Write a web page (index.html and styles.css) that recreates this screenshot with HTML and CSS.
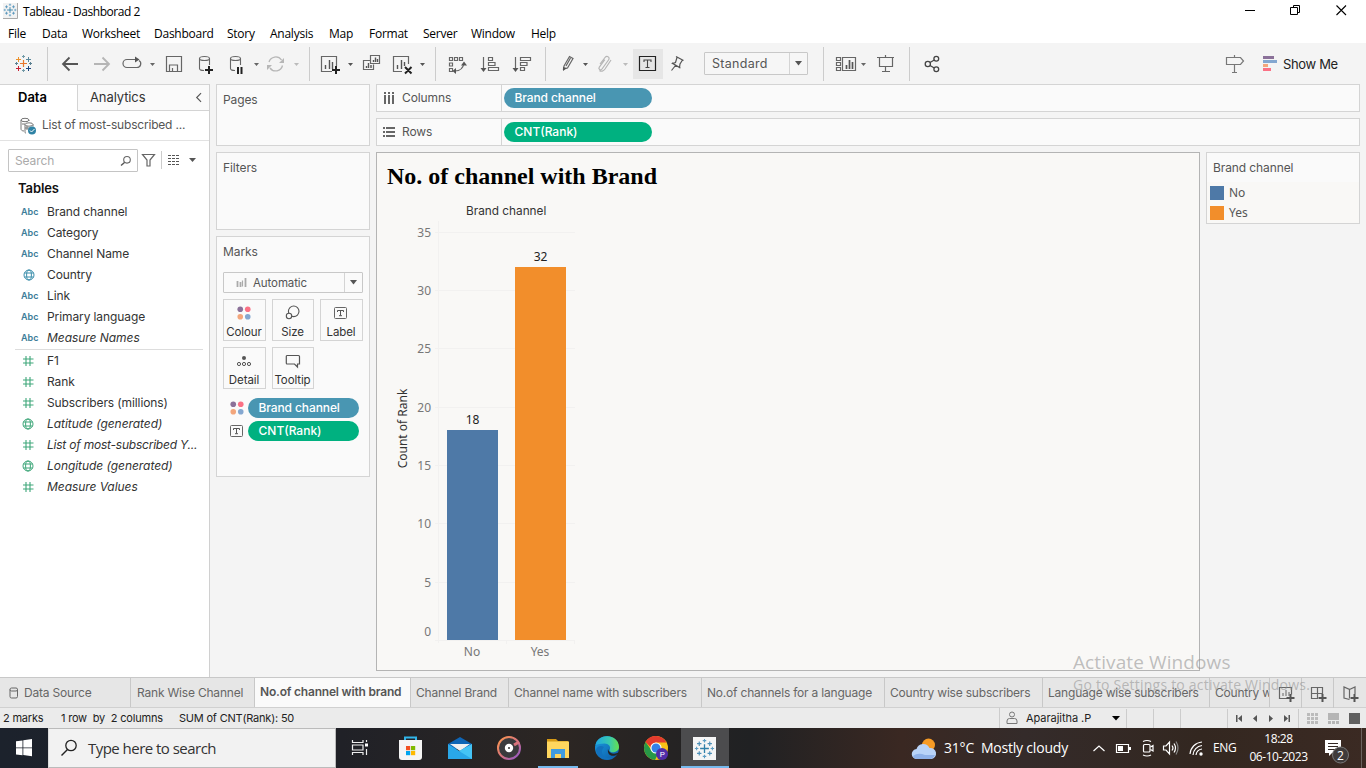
FILE: index.html
```html
<!DOCTYPE html>
<html lang="en">
<head>
<meta charset="utf-8">
<title>Tableau - Dashborad 2</title>
<link rel="stylesheet" href="styles.css">
</head>
<body>
<svg class="defs" width="0" height="0">
  <symbol id="globe" viewBox="0 0 12 12"><g fill="none" stroke="currentColor" stroke-width="1"><circle cx="6" cy="6" r="5"/><ellipse cx="6" cy="6" rx="2.4" ry="5"/><path d="M1.5 4h9M1.5 8h9"/></g></symbol>
  <symbol id="hash" viewBox="0 0 12 12"><path d="M4 1v10M8 1v10M1 4h10.500M1 8h10.500" fill="none" stroke="currentColor" stroke-width="1.100"/></symbol>
  <symbol id="dots" viewBox="0 0 16 16"><circle cx="4" cy="4" r="3" fill="#8b7199"/><circle cx="12" cy="4" r="3" fill="#fb7185"/><circle cx="4" cy="12" r="3" fill="#f3a67c"/><circle cx="12" cy="12" r="3" fill="#84a7d0"/></symbol>
  <symbol id="label" viewBox="0 0 14 14"><rect x=".5" y="1.500" width="12" height="11" rx="1" fill="none" stroke="#666"/><path d="M3.500 6V4.500h6V6M6.500 4.500v5M5 9.700h3" fill="none" stroke="#555"/></symbol>
  <symbol id="spark" viewBox="0 0 24 24"><path d="M12 7v10M7 12h10" stroke="#2f7fa8" stroke-width="1.500"/><path d="M12 1v4M10 3h4M12 19v4M10 21h4M3 10v4M1 12h4M21 10v4M19 12h4" stroke="#5b9cc2" stroke-width="1.200"/><path d="M6 4v5M3.500 6.500h5M18 4v5M15.500 6.500h5M6 15v5M3.500 17.500h5M18 15v5M15.500 17.500h5" stroke="#4b8fb8" stroke-width="1.300"/></symbol>
</svg>

<header class="titlebar">
  <svg class="app-icon" width="15" height="16" viewBox="0 0 15 16"><path d="M0 0h14v15H0z" fill="#f2f2f2"/><path d="M14.500 0v15.500H0" fill="none" stroke="#aaa"/><use href="#spark" x="0" y="0" width="14" height="14"/></svg>
  <span class="title">Tableau - Dashborad 2</span>
  <svg class="win-buttons" width="120" height="22" viewBox="1240 0 120 22"><g fill="none" stroke="#000"><path d="M1245 10.500h10M1293.500 7.500v-2h6v7h-2M1290.500 7.500h7v7h-7z"/><path d="M1336.500 5.500l9.500 9.500M1346 5.500l-9.500 9.500" stroke-width="1.100"/></g></svg>
</header>

<nav class="menubar"><span class="m1">File</span><span class="m2">Data</span><span class="m3">Worksheet</span><span class="m4">Dashboard</span><span class="m5">Story</span><span class="m6">Analysis</span><span class="m7">Map</span><span class="m8">Format</span><span class="m9">Server</span><span class="m10">Window</span><span class="m11">Help</span></nav>

<section class="toolbar">
  <svg width="310" height="41" viewBox="0 43 310 41">
    <g fill="none" stroke-width="1.200">
      <path d="M23.500 60v7M20 63.500h7" stroke="#e8762c" stroke-width="1.200"/>
      <path d="M18.500 57v5M16 59.500h5" stroke="#eb912c" stroke-width="1"/><path d="M28.500 57v5M26 59.500h5" stroke="#59879b" stroke-width="1"/>
      <path d="M18.500 66v5M16 68.500h5" stroke="#c72035" stroke-width="1"/><path d="M28.500 66v5M26 68.500h5" stroke="#1f457e" stroke-width="1"/>
      <path d="M23.500 55v3M22 56.500h3M23.500 69v3M22 70.500h3" stroke="#7199a6" stroke-width="1"/><path d="M16.500 62v3M15 63.500h3M30.500 62v3M29 63.500h3" stroke="#5b8091" stroke-width="1"/>
    </g>
    <path d="M47.500 47v34M309.500 47v34" stroke="#ccc"/>
    <path d="M78 64H63M69.500 57.500L63 64l6.500 6.500" fill="none" stroke="#555" stroke-width="1.800"/>
    <path d="M94 64h15M102.500 57.500L109 64l-6.500 6.500" fill="none" stroke="#b5b5b5" stroke-width="1.800"/>
    <path d="M130 59.500h-3a4 4 0 0 0 0 8h10a3.800 3.800 0 0 0 2-7M129 59.500h7" fill="none" stroke="#666" stroke-width="1.200"/><path d="M135 56.500l4.500 3-4.500 3z" fill="#555"/>
    <path d="M150 63h5l-2.500 3zM254 63h5l-2.500 3z" fill="#666"/><path d="M294 63h5l-2.500 3z" fill="#bbb"/>
    <path d="M166.500 56.500h15v15h-15zM169.500 71v-6h8v6M172.500 71v-3" fill="none" stroke="#666" stroke-width="1.200"/>
    <g fill="none" stroke="#666" stroke-width="1.100"><ellipse cx="204.500" cy="58.500" rx="5" ry="2"/><path d="M199.500 58.500v10c0 1.500 2 2 4.500 2M209.500 58.500V65"/><ellipse cx="235.500" cy="58.500" rx="5" ry="2"/><path d="M230.500 58.500v10c0 1.500 2 2 4.500 2M240.500 58.500V65"/></g>
    <path d="M205 70h8M209 66v8" stroke="#222" stroke-width="2"/><path d="M238 67v7M241.500 67v7" stroke="#222" stroke-width="2"/>
    <path d="M269 62a7 7 0 0 1 12.500-2M282.500 65.500a7 7 0 0 1-12.500 2.500" fill="none" stroke="#b7b7b7" stroke-width="1.300"/><path d="M284 58v5h-5zM267 70v-5h5z" fill="#b7b7b7"/>
  </svg>
  <svg width="323" height="41" viewBox="310 43 323 41">
    <g fill="none" stroke="#666" stroke-width="1.200">
      <path d="M332 71.500h-10.500v-15h15V66M402 71.500h-8.500v-15h15V64"/>
      <path d="M370.500 55.500h9v8h-9zM370 60.500h-6.500v9h10v-5"/>
      <path d="M449.500 57.500h3v3h-3zM454.500 57.500h3v3h-3zM459.500 57.500h3v3h-3zM449.500 63h3v3h-3zM449.500 68.500h3v3h-3z"/>
      <path d="M455 71c5 0 8-2 9-8"/>
      <path d="M483.500 57v13M488.500 57.500h4v3h-4zM488.500 62.500h6.500v3h-6.500zM488.500 67.500h10v3h-10zM515.500 57v13M520.500 57.500h10v3h-10zM520.500 62.500h6.500v3h-6.500zM520.500 67.500h4v3h-4z"/>
      <path d="M564 66l5.500-9.500 3.500 2-5.500 9.500-4 1zM566 66l4.500-8"/>
    </g>
    <path d="M325.500 65v4M329.500 60v9M332.500 62v7M397.500 65v4M401.500 60v9M404.500 62v4M373.500 60v2M375.500 57.500v4.500M377.500 59v3M366.500 66v2M368.500 63v5M371 65v3" stroke="#555" stroke-width="1.400"/>
    <path d="M332 70h8M336 66v8M405 67l6.500 6.500M411.500 67l-6.500 6.500" stroke="#222" stroke-width="2"/>
    <path d="M456 68l-3.500 3 3.500 3zM461 65.500l3-4 3 4zM480.500 68h6l-3 4zM512.500 68h6l-3 4zM348 63h5l-2.500 3zM420 63h5l-2.500 3zM583 63h5l-2.500 3zM563 67l4 1-4 3z" fill="#555"/>
    <path d="M623 63h5l-2.500 3z" fill="#bbb"/>
    <path d="M600 64l5-6.500c2-2.500 5.500 0 3.500 2.500l-6.500 9c-1.500 2-4 0-2.700-1.800l5.500-7.500M611 60l-6 9c-1.500 2-4 3-5.500 1.500" fill="none" stroke="#b5b5b5" stroke-width="1.200"/>
    <path d="M435.500 47v34M545.500 47v34" stroke="#ccc"/>
  </svg>
  <svg class="pressed" width="30" height="30" viewBox="633 49 30 30"><path d="M639.500 56.500h16v14h-16z" fill="none" stroke="#222" stroke-width="1.200"/><path d="M644 62v-2h7v2M647.500 60v7.500M645.500 67.500h4" fill="none" stroke="#444" stroke-width="1.100"/></svg>
  <svg width="41" height="41" viewBox="663 43 41 41"><path d="M676 56.500l7.500 4M677 57.500l-1.500 5-3 1 7 4 .5-3.500 2.500-4M675.500 65.500l-4 5M672 63l8.500 5" fill="none" stroke="#555" stroke-width="1.200"/></svg>
  <div class="fit"><span>Standard</span><i><svg width="8" height="5"><path d="M0 0h7L3.500 4.500z" fill="#555"/></svg></i></div>
  <svg width="455" height="41" viewBox="808 43 455 41">
    <path d="M823.500 47v34M909.500 47v34" stroke="#ccc"/>
    <path d="M836.500 57.500h4v3h-4zM836.500 62.500h4v3h-4zM836.500 67.500h4v3h-4zM842.500 57.500h13v13h-13zM877 57.500h17M879.500 57.500v9h13v-9M885.500 55v2M885.500 67v4M882 71.500h8" fill="none" stroke="#666" stroke-width="1.200"/>
    <path d="M846.500 65v4M849.500 60v9M852.500 62v7" stroke="#555" stroke-width="1.700"/><path d="M861 63h5l-2.500 3z" fill="#666"/>
    <g fill="none" stroke="#444" stroke-width="1.300"><circle cx="927.800" cy="64" r="2.600"/><circle cx="936.300" cy="58.700" r="2.400"/><circle cx="936.300" cy="69.300" r="2.400"/><path d="M930 62.500l4.300-2.500M930 65.500l4.300 2.500"/></g>
    <path d="M1226.500 57.500h14l3 3.500-3 3.500h-14zM1234.500 55v2M1234.500 65v7M1232 72.500h5" fill="none" stroke="#777" stroke-width="1.200"/>
  </svg>
  <svg width="20" height="41" viewBox="1263 43 20 41"><path d="M1263 56h11v3h-11z" fill="#8b7199"/><path d="M1263 60h14v3h-14z" fill="#84a7d0"/><path d="M1263 64h5v3h-5z" fill="#f3a67c"/><path d="M1263 68h8v3h-8z" fill="#fb7185"/></svg>
  <span class="showme">Show Me</span>
</section>

<main class="workspace">
  <aside class="datapane">
    <div class="pane-tabs"><b>Data</b><span>Analytics</span><svg width="14" height="26" viewBox="195 84 14 26"><path d="M201 92.500l-4.500 4.500 4.500 4.500" fill="none" stroke="#555" stroke-width="1.200"/></svg></div>
    <div class="source"><svg width="18" height="18" viewBox="19 116 18 18"><g fill="none" stroke="#777"><ellipse cx="25" cy="119" rx="4" ry="1.700"/><path d="M21 119v9c0 1 1 2 3 2M29 119v1"/><ellipse cx="29" cy="123.500" rx="4" ry="1.700"/><path d="M25 123.500v6.500c0 1 0 2 1 2.500M33 123.500v2M22 123h3M25 127h4M27 125v4"/></g><circle cx="32" cy="129.500" r="4" fill="#2f83a5"/><path d="M30 129.500l1.500 1.500 3-3" fill="none" stroke="#fff"/></svg><span>List of most-subscribed ...</span></div>
    <div class="searchrow"><div class="search"><span>Search</span><svg width="12" height="12" viewBox="0 0 12 12"><circle cx="7" cy="4.800" r="3.300" fill="none" stroke="#666" stroke-width="1.100"/><path d="M4.500 7.500L1 10.500" stroke="#555" stroke-width="1.400"/></svg></div>
      <svg width="66" height="24" viewBox="138 149 66 24"><path d="M142.500 154.500h12l-4.500 5.500v6h-3v-6z" fill="none" stroke="#666" stroke-width="1.200"/><path d="M161.500 151v18" stroke="#ccc"/><path d="M168 155.500h12M168 158.500h12M168 161.500h12M168 164.500h12" stroke="#555" stroke-width="1" stroke-dasharray="3 1"/><path d="M189 158h7l-3.500 4z" fill="#555"/></svg></div>
    <h2>Tables</h2>
    <ul class="fields">
      <li><b>Abc</b>Brand channel</li><li><b>Abc</b>Category</li><li><b>Abc</b>Channel Name</li>
      <li><svg class="ic blue"><use href="#globe"/></svg>Country</li><li><b>Abc</b>Link</li><li><b>Abc</b>Primary language</li><li><b>Abc</b><em>Measure Names</em></li>
    </ul>
    <ul class="fields measures">
      <li><svg class="ic"><use href="#hash"/></svg>F1</li><li><svg class="ic"><use href="#hash"/></svg>Rank</li><li><svg class="ic"><use href="#hash"/></svg>Subscribers (millions)</li>
      <li><svg class="ic"><use href="#globe"/></svg><em>Latitude (generated)</em></li><li><svg class="ic"><use href="#hash"/></svg><em class="long">List of most-subscribed Y...</em></li><li><svg class="ic"><use href="#globe"/></svg><em>Longitude (generated)</em></li><li><svg class="ic"><use href="#hash"/></svg><em>Measure Values</em></li>
    </ul>
  </aside>

  <div class="cards">
    <section class="card pages">Pages</section>
    <section class="card filters">Filters</section>
    <section class="card marks">
      <div class="card-title">Marks</div>
      <div class="marktype"><svg width="11" height="11" viewBox="0 0 11 11"><path d="M1.500 4v6M4.500 5v5M9.500 1v9" stroke="#aaa" stroke-width="1.800"/><path d="M6.500 3.500v6" stroke="#aaa" stroke-width="1.200"/></svg><span>Automatic</span><i><svg width="8" height="5"><path d="M0 0h7L3.500 4.500z" fill="#555"/></svg></i></div>
      <div class="markgrid">
        <div><svg width="16" height="16" viewBox="0 0 16 16"><use href="#dots" x=".5" y=".5" width="15" height="15"/></svg><span>Colour</span></div>
        <div><svg width="16" height="16" viewBox="0 0 16 16"><g fill="none" stroke="#555" stroke-width="1.100"><circle cx="8.700" cy="6.300" r="5.300"/><circle cx="4" cy="11" r="2.700" fill="#fafafa"/></g></svg><span>Size</span></div>
        <div><svg width="14" height="16"><use href="#label" width="14" height="14" y="1"/></svg><span>Label</span></div>
        <div><svg width="16" height="16" viewBox="0 0 16 16"><circle cx="8" cy="5" r="2" fill="#555"/><g fill="none" stroke="#555"><circle cx="3" cy="11" r="1.600"/><circle cx="8" cy="11" r="1.600"/><circle cx="13" cy="11" r="1.600"/></g></svg><span>Detail</span></div>
        <div><svg width="16" height="16" viewBox="0 0 16 16"><path d="M2 2.500h11.500q1 0 1 1V11h-2v3l-3-3H2q-.7 0-.7-1V3.500q0-1 .7-1z" fill="none" stroke="#555" stroke-width="1.200"/></svg><span>Tooltip</span></div>
      </div>
      <div class="markpill"><svg width="16" height="16" viewBox="0 0 16 16"><use href="#dots" x=".5" y=".5" width="15" height="15"/></svg><span class="pill">Brand channel</span></div>
      <div class="markpill"><svg width="16" height="16"><use href="#label" width="14" height="14" x="1" y="1"/></svg><span class="pill green">CNT(Rank)</span></div>
    </section>
  </div>

  <div class="view">
    <div class="shelf"><div class="shelf-name"><svg width="14" height="14" viewBox="0 0 14 14"><path d="M3 1v2M3 4v9M7 1v2M7 4v9M11 1v2M11 4v9" stroke="#666" stroke-width="2"/></svg>Columns</div><span class="pill">Brand channel</span></div>
    <div class="shelf"><div class="shelf-name"><svg width="14" height="14" viewBox="0 0 14 14"><path d="M1 3h2M4 3h9M1 7h2M4 7h9M1 11h2M4 11h9" stroke="#666" stroke-width="2"/></svg>Rows</div><span class="pill green">CNT(Rank)</span></div>
    <div class="viewrow">
      <section class="canvas">
        <h1>No. of channel with Brand</h1>
        <svg class="chart" width="220" height="470" viewBox="377 198 220 470">
          <path d="M435 232.500h140M435 290.500h140M435 348.500h140M435 407.500h140M435 465.500h140M435 523.500h140M435 582.500h140M435 640.500h140M438.500 221v422M506.500 640v4M574.500 640v4" stroke="#f2f1f0" fill="none"/>
          <path d="M447 430h51v210h-51z" fill="#4e79a7"/><path d="M515 267h51v373h-51z" fill="#f28e2b"/>
          <text x="466" y="215" class="head">Brand channel</text>
          <g class="axis" text-anchor="end"><text x="431" y="237">35</text><text x="431" y="295">30</text><text x="431" y="353">25</text><text x="431" y="412">20</text><text x="431" y="470">15</text><text x="431" y="528">10</text><text x="431" y="587">5</text><text x="431" y="636">0</text></g>
          <g class="axis" text-anchor="middle"><text x="472" y="656">No</text><text x="540" y="656">Yes</text></g>
          <g class="val" text-anchor="middle"><text x="472.500" y="424">18</text><text x="540.500" y="261">32</text></g>
          <text class="ytitle" text-anchor="middle" transform="translate(406.500 428.500) rotate(-90)">Count of Rank</text>
        </svg>
      </section>
      <section class="legend"><div>Brand channel</div><ul><li><i class="no"></i>No</li><li><i class="yes"></i>Yes</li></ul></section>
    </div>
  </div>
</main>

<nav class="sheets">
  <span class="t1"><svg width="10" height="12" viewBox="0 0 10 12"><path d="M1 2.500v7q0 1.500 1.500 1.500h4.500q1.500 0 1.500-1.500v-7q0-1.500-1.500-1.500H2.500Q1 1 1 2.500 1 4 2.500 4h4.500q1.500 0 1.500-1.500" fill="none" stroke="#666"/></svg>Data Source</span><span class="t2">Rank Wise Channel</span><span class="t3">No.of channel with brand</span><span class="t4">Channel Brand</span><span class="t5">Channel name with subscribers</span><span class="t6">No.of channels for a language</span><span class="t7">Country wise subscribers</span><span class="t8">Language wise subscribers</span><span class="t9">Country w</span>
  <svg width="96" height="30" viewBox="1270 677 96 30"><path d="M1301.500 677v30M1333.500 677v30" stroke="#c8c8c8"/><path d="M1287 697.500h-7.500v-11h12v7M1318 697.500h-6.500v-11h11v7M1317.500 686.500v11M1311.500 692.500h11M1349.500 697.500v-9l-5.500-2.500v11l5.500 1.500M1349.500 688.500l5.500-2.500v7" fill="none" stroke="#666" stroke-width="1.200"/><path d="M1283 692v3M1286 689v6M1289 691v4" stroke="#666"/><path d="M1286.500 697h8M1290.500 693v8M1318.500 697h8M1322.500 693v8M1350.500 697h8M1354.500 693v8" stroke="#555" stroke-width="2"/></svg>
</nav>

<footer class="status">
  <span class="s1">2 marks</span><span class="s2">1 row&nbsp; by&nbsp; 2 columns</span><span class="s3">SUM of CNT(Rank): 50</span>
  <span class="user"><svg width="12" height="14" viewBox="0 0 12 14"><g fill="none" stroke="#777" stroke-width="1"><circle cx="6" cy="3.500" r="2.500"/><path d="M1 12.500V10q0-2.500 2.500-2.500h5q2.500 0 2.500 2.500v2.500z"/></g></svg><span>Aparajitha .P</span><svg width="8" height="5"><path d="M0 0h8L4 4.500z" fill="#000"/></svg></span>
  <svg width="240" height="21" viewBox="1126 707 240 21"><path d="M1126.500 708v20M1153.500 708v20M1180.500 708v20M1227.500 708v20M1298.500 708v20" stroke="#ccc"/><path d="M1236 714h1.500v7h-1.500zM1242 714v7l-4-3.500zM1257 714v7l-4-3.500zM1269 714v7l4-3.500zM1284 714v7l4-3.500zM1288.500 714h1.500v7h-1.500z" fill="#555"/><path d="M1307 713.500h11M1307 717.500h11M1307 721.500h11" stroke="#bbb" stroke-width="3" stroke-dasharray="3 1"/><path d="M1328 712h11v7h-11z" fill="#b5b5b5"/><path d="M1328 721.500h11" stroke="#b5b5b5" stroke-width="3" stroke-dasharray="3 1"/><path d="M1349 712h11v11h-11z" fill="#606060"/></svg>
</footer>

<footer class="taskbar">
  <svg width="48" height="40" viewBox="0 728 48 40"><path d="M16 741.300l6.500-.9v7H16zM23.300 740.200l8.700-1.200v8.400h-8.700zM16 748.300h6.500v7l-6.500-.9zM23.300 748.300H32v7.900l-8.700-1.200z" fill="#fff"/></svg>
  <div class="winsearch"><svg width="18" height="18" viewBox="0 0 18 18"><circle cx="11" cy="6.500" r="5.200" fill="none" stroke="#222" stroke-width="1.300"/><path d="M7.500 10.500L1.500 16.500" stroke="#222" stroke-width="1.400"/></svg><span>Type here to search</span></div>
  <svg class="apps" width="574" height="40" viewBox="336 728 574 40">
    <defs>
      <linearGradient id="gm" x1="0" y1="0" x2="1" y2="1"><stop offset="0" stop-color="#ff9a4b"/><stop offset=".5" stop-color="#d8747c"/><stop offset="1" stop-color="#8a55d0"/></linearGradient>
      <linearGradient id="ge" x1="0" y1="0" x2="1" y2="0"><stop offset="0" stop-color="#1ea7e4"/><stop offset=".6" stop-color="#39c9ae"/><stop offset="1" stop-color="#66e04c"/></linearGradient>
      <linearGradient id="gb" x1="0" y1="0" x2="1" y2="1"><stop offset="0" stop-color="#1b9de2"/><stop offset="1" stop-color="#0c59a4"/></linearGradient>
    </defs>
    <path d="M352.500 740v2.500h10.500V740M352.500 755v-2.500h10.500v2.500M352.500 745h10.500v5h-10.500zM366.500 740v2M366.500 749v6" fill="none" stroke="#eee" stroke-width="1.200"/><path d="M365 743.500h3v3h-3z" fill="#fff"/>
    <path d="M405 740v-2.500h11v2.500" fill="none" stroke="#31b5e9" stroke-width="2"/><path d="M399 740h23v17q0 3-3 3h-17q-3 0-3-3z" fill="#f5f5f5"/><path d="M406 746h4.200v4.200H406z" fill="#f25022"/><path d="M411 746h4.200v4.200H411z" fill="#7fba00"/><path d="M406 751h4.200v4.200H406z" fill="#00a4ef"/><path d="M411 751h4.200v4.200H411z" fill="#ffb900"/>
    <path d="M448 744l12-7 12 7v5h-24z" fill="#0f65b5"/><path d="M450 744h20l-10 7z" fill="#f0f0f0"/><path d="M448 744l12 7.500 12-7.500v15h-24z" fill="#2aa7e8"/><path d="M472 744v15l-13-8z" fill="#45c4f5"/>
    <circle cx="509" cy="748" r="11" fill="#3a3a3d" stroke="url(#gm)" stroke-width="2"/><path d="M514 745l5-3" stroke="#d8747c" stroke-width="3"/><circle cx="509" cy="748" r="4.200" fill="#fff"/><circle cx="509" cy="748" r="1" fill="#333"/>
    <path d="M547 739h9l2 2h10v5h-21z" fill="#d69a15"/><path d="M547 741.500h22v16.500h-22z" fill="#ffd65e"/><path d="M551 749h14v9h-4v-4h-6v4h-4z" fill="#3f9be0"/>
    <circle cx="607" cy="748" r="12" fill="url(#gb)"/><path d="M595.500 745c2-12 23-12 23.500 2 0 6-9 6.500-9.500 3.500 2-4-1-7-5-7-4 0-7 1-9 1.500z" fill="url(#ge)"/><path d="M619 752c-4 3-10 2-11-3-1 6 4 9 10 5z" fill="#232323"/><path d="M604 747c-6 7 2 13 9 11-5 3-16 2-17-8 1-4 5-5 8-3z" fill="#1271bd"/>
    <circle cx="656" cy="748" r="12" fill="#fbc116"/><path d="M645.500 742A12 12 0 0 1 666.500 742.500H656q-5 1-5 5z" fill="#e33b2e"/><path d="M645.600 742A12 12 0 0 0 655 760l4-8-7-1z" fill="#279847"/><circle cx="656" cy="748" r="5.600" fill="#fff"/><circle cx="656" cy="748" r="4.500" fill="#3481e8"/><circle cx="662" cy="754" r="6" fill="#512da8"/><text x="659.800" y="757" class="avatar">P</text>
    <path d="M681 728h48v40h-48z" fill="#4c4c4e"/><path d="M681 766h48v2h-48zM538 766h40v2h-40z" fill="#76b9ed"/><path d="M693 737h23v23h-23z" fill="#f5f5f5"/><use href="#spark" x="694" y="738" width="21" height="21"/>
  </svg>
  <svg width="34" height="40" viewBox="910 728 34 40"><circle cx="928.500" cy="745" r="6.500" fill="#f79b25"/><path d="M917 759a5 5 0 0 1-.5-10 7 7 0 0 1 13-1 5.500 5.500 0 0 1 2 11z" fill="#b9d3f7"/><path d="M913 756q5-4 12-1 5 0 10 0-2 4-5 4h-13q-3 0-4-3z" fill="#8fb1e8"/></svg>
  <span class="weather">31°C&nbsp; Mostly cloudy</span>
  <svg width="120" height="40" viewBox="1088 728 120 40"><g fill="none" stroke="#fff" stroke-width="1.200"><path d="M1093.500 751l5.500-5 5.500 5M1116.500 744.500h12v8h-12z"/><rect x="1143.500" y="744.500" width="6.500" height="7.500" rx="1"/><path d="M1150.500 747l2.500-1.500v5.500l-2.500-1.500M1143 741.500q4-2 8 0M1143 755q4 2 8 0M1163.500 746h2.500l3.500-4v12l-3.500-4h-2.500z"/><path d="M1172 745.500q2 2.500 0 5M1174 743.500q3 4.500 0 9"/><path d="M1176 741.500q4 6.500 0 13" stroke="#888"/><path d="M1190 754a13 13 0 0 1 12-12M1193 755a10 10 0 0 1 9-9.500M1196 755a7 7 0 0 1 6-6"/></g><path d="M1118 746h5v5h-5zM1129 747h2v3h-2z" fill="#fff"/><circle cx="1201" cy="754" r="1.700" fill="#fff"/></svg>
  <span class="lang">ENG</span>
  <span class="clock"><span>18:28</span><span>06-10-2023</span></span>
  <svg width="54" height="40" viewBox="1312 728 54 40"><path d="M1325 740h16v13h-9l-3 3v-3h-4z" fill="#fff"/><path d="M1328 743.500h10M1328 746.500h10M1328 749.500h7" stroke="#342925" stroke-width="1.200"/><circle cx="1340.500" cy="755" r="8" fill="#3f3b3b" stroke="#777"/><text x="1337" y="759.500" class="badge">2</text><path d="M1361.500 728v40" stroke="#6b625e"/></svg>
</footer>

<div class="watermark"><div>Activate Windows</div><p>Go to Settings to activate Windows.</p></div>
</body>
</html>
```

FILE: styles.css
```css
* { box-sizing: border-box; }
body { margin: 0; width: 1366px; height: 768px; overflow: hidden; position: relative; display: flex; flex-direction: column; background: #f4f4f4; font: 370 12px/16px Inter, "Noto Sans", sans-serif; letter-spacing: -.1px; color: #333; white-space: nowrap; }
ul, h1, h2, p { margin: 0; padding: 0; list-style: none; }
svg { display: block; flex: none; }
.defs { display: none; }

.titlebar { height: 22px; flex: none; background: #fff; display: flex; padding-left: 3px; color: #000; font: 12px/22px "Open Sans", sans-serif; }
.app-icon { margin: 3px 5px 0 0; }
.title { letter-spacing: -.45px; line-height: 23px; }
.win-buttons { margin: 0 6px 0 auto; }
.menubar { height: 21px; flex: none; background: #fff; display: flex; padding-left: 8px; color: #000; font: 12px/23px "Open Sans", sans-serif; letter-spacing: -.25px; }
.m1 { width: 34px; } .m2 { width: 40px; } .m3 { width: 72px; } .m4 { width: 73px; } .m5 { width: 43px; } .m6 { width: 59px; } .m7 { width: 40px; } .m8 { width: 54px; } .m9 { width: 48px; } .m10 { width: 60px; }

.toolbar { height: 41px; flex: none; display: flex; align-items: center; background: #f4f4f4; }
.pressed { background: #e6e6e6; }
.fit { width: 104px; height: 23px; border: 1px solid #c8c8c8; border-radius: 1px; display: flex; background: #f6f6f6; font-size: 12.500px; line-height: 21px; letter-spacing: .3px; }
.fit span { flex: 1; padding-left: 7px; color: #555; }
.fit i, .marktype i { width: 18px; border-left: 1px solid #d4d4d4; display: flex; align-items: center; justify-content: center; }
.showme { font-size: 13px; color: #222; letter-spacing: -.35px; }

.workspace { height: 593px; flex: none; display: flex; gap: 6px; }
.datapane { width: 210px; background: #fff; border-right: 1px solid #d0d0d0; border-top: 1px solid #d4d4d4; }
.pane-tabs { height: 26px; display: flex; font-size: 13px; line-height: 25px; color: #333; }
.pane-tabs b { width: 77px; padding-left: 18px; font-weight: 600; color: #000; letter-spacing: 0; }
.pane-tabs span { width: 118px; padding-left: 12px; }
.pane-tabs span, .pane-tabs svg { background: #fafafa; border-bottom: 1px solid #d4d4d4; height: 26px; }
.pane-tabs span { border-left: 1px solid #d4d4d4; }
.source { height: 30px; border-bottom: 1px solid #e2e2e2; display: flex; align-items: center; padding-left: 19px; gap: 5px; color: #555; letter-spacing: -.2px; }
.source span { position: relative; top: -1px; }
.searchrow { display: flex; padding: 8px 0 0 8px; }
.search { width: 130px; height: 23px; border: 1px solid #c4c4c4; border-radius: 1px; display: flex; align-items: center; justify-content: space-between; padding: 0 5px 0 6px; color: #aaa; }
.datapane h2 { font-size: 13px; font-weight: 600; line-height: 20px; color: #111; padding: 5px 0 3px 18px; }
.fields li { height: 21px; line-height: 20px; display: flex; align-items: center; padding-left: 21px; }
.fields b { width: 26px; color: #3d7d99; font-size: 9px; font-weight: 600; letter-spacing: 0; padding-top: 1px; }
.ic { width: 12px; height: 12px; margin: 0 12px 0 2px; color: #3fa77a; }
.blue { color: #3d8fac; }
.fields em { font-size: 12px; letter-spacing: -.05px; }
.fields .long { letter-spacing: -.22px; }
.measures { border-top: 1px solid #ddd; margin: 1px 6px 0 15px; }
.measures li { padding-left: 5px; }
.measures .ic { margin-right: 13px; }

.cards { width: 154px; display: flex; flex-direction: column; gap: 6px; }
.card { background: #fafafa; border: 1px solid #d4d4d4; padding: 7px 6px; color: #555; }
.pages { height: 62px; } .filters { height: 78px; } .marks { height: 241px; }
.marktype { height: 21px; border: 1px solid #c8c8c8; border-radius: 1px; margin-top: 12px; display: flex; align-items: center; padding-left: 12px; font-size: 11.500px; }
.marktype span { flex: 1; padding-left: 6px; }
.marktype i { height: 19px; }
.markgrid { display: grid; grid-template-columns: 43px 42px 43px; gap: 6px; margin-top: 6px; }
.markgrid div { height: 42px; border: 1px solid #d4d4d4; display: flex; flex-direction: column; align-items: center; padding: 5px 1px 0 0; font-size: 11.500px; line-height: 14px; color: #333; gap: 4px; }
.markpill { display: flex; align-items: center; padding-left: 6px; gap: 3px; height: 20px; margin-top: 3px; }
.markgrid + .markpill { margin-top: 9px; }
.pill { display: block; width: 148px; height: 20px; border-radius: 10px; background: #4996b2; color: #fff; font: 500 12px/20px Inter, sans-serif; padding-left: 10.500px; }
.markpill .pill { width: 111px; }
.pill.green { background: #00b180; letter-spacing: 0; }

.view { width: 984px; }
.shelf { height: 28px; border: 1px solid #d4d4d4; background: #fafafa; margin-bottom: 6px; display: flex; align-items: center; gap: 2px; }
.shelf-name { width: 125px; height: 26px; border-right: 1px solid #d4d4d4; display: flex; align-items: center; padding-left: 5px; gap: 6px; color: #555; }
.viewrow { display: flex; gap: 6px; }
.canvas { width: 824px; height: 519px; border: 1px solid #b4b4b4; background: #f9f8f6; }
.canvas h1 { font: bold 24px/28px "Liberation Serif", serif; letter-spacing: 0; color: #000; padding: 9px 0 8px 10px; }
.chart { font: 12px "Noto Sans", sans-serif; letter-spacing: 0; }
.head { font-family: Inter, sans-serif; fill: #333; font-size: 11.800px; }
.axis { fill: #777; } .val { fill: #222; } .ytitle { fill: #333; }
.legend { width: 154px; height: 72px; border: 1px solid #d4d4d4; background: #fafafa; color: #555; }
.legend div { padding: 7px 0 0 6px; height: 29px; }
.legend ul { background: #f9f8f6; height: 41px; padding-top: 1px; font: 12px/20px "Noto Sans", sans-serif; letter-spacing: 0; }
.legend li { display: flex; align-items: center; height: 20px; padding-left: 3px; gap: 5px; }
.legend i { width: 14px; height: 14px; }
.no { background: #4e79a7; } .yes { background: #f28e2b; }

.sheets { height: 31px; flex: none; display: flex; background: #e6e6e6; border-top: 1px solid #c8c8c8; border-bottom: 1px solid #d0d0d0; color: #666; line-height: 30px; letter-spacing: -.2px; }
.sheets span { border-right: 1px solid #c8c8c8; padding-left: 5px; overflow: hidden; }
.sheets .t1 { width: 131px; display: flex; align-items: center; padding-left: 9px; gap: 5px; }
.sheets .t2 { width: 124px; padding-left: 6px; } .sheets .t3 { width: 156px; background: #fafafa; font-weight: 600; color: #555; line-height: 27px; } .t4 { width: 98px; } .t5 { width: 193px; } .t6 { width: 183px; } .t7 { width: 158px; } .t8 { width: 167px; } .t9 { width: 60px; }
.status { height: 20px; flex: none; display: flex; background: #ebebeb; color: #222; font-size: 11px; line-height: 20px; padding-left: 3px; letter-spacing: -.2px; }
.s1 { width: 58px; } .s2 { width: 118px; } .s3 { width: 820px; }
.user { width: 127px; border-left: 1px solid #ccc; display: flex; align-items: center; padding-left: 6px; }
.user span { width: 86px; margin-left: 8px; letter-spacing: -.05px; }

.taskbar { height: 40px; flex: none; display: flex; color: #fff; background: linear-gradient(90deg, #1c222c 0, #202127 25%, #2c2623 41%, #202123 55%, #3a2822 66%, #342b2a 75%, #332720 88%, #3b2a23 100%); }
.winsearch { width: 288px; background: #f2f2f2; border: 1px solid #bbb; border-left-color: #ddd; display: flex; align-items: center; padding-left: 11px; gap: 10px; color: #333; font: 15px/38px "Open Sans", sans-serif; letter-spacing: -.53px; }
.weather { width: 144px; font: 14px/40px "Open Sans", sans-serif; letter-spacing: -.2px; }
.lang { width: 37px; padding-left: 5px; font: 12px/40px "Open Sans", sans-serif; letter-spacing: -.4px; }
.clock { width: 67px; padding-top: 2px; display: flex; flex-direction: column; align-items: center; font: 12px/18px "Open Sans", sans-serif; letter-spacing: -.45px; }
.badge { font: 12px "Open Sans", sans-serif; fill: #fff; }
.avatar { font: 8px Roboto, sans-serif; fill: #fff; }
.watermark { position: absolute; left: 1073px; top: 650px; color: rgba(140, 140, 140, .55); font-family: "Open Sans", sans-serif; font-weight: 400; }
.watermark div { font-size: 19px; line-height: 24px; letter-spacing: .1px; }
.watermark p { font-size: 14px; line-height: 21px; letter-spacing: .22px; }
```
